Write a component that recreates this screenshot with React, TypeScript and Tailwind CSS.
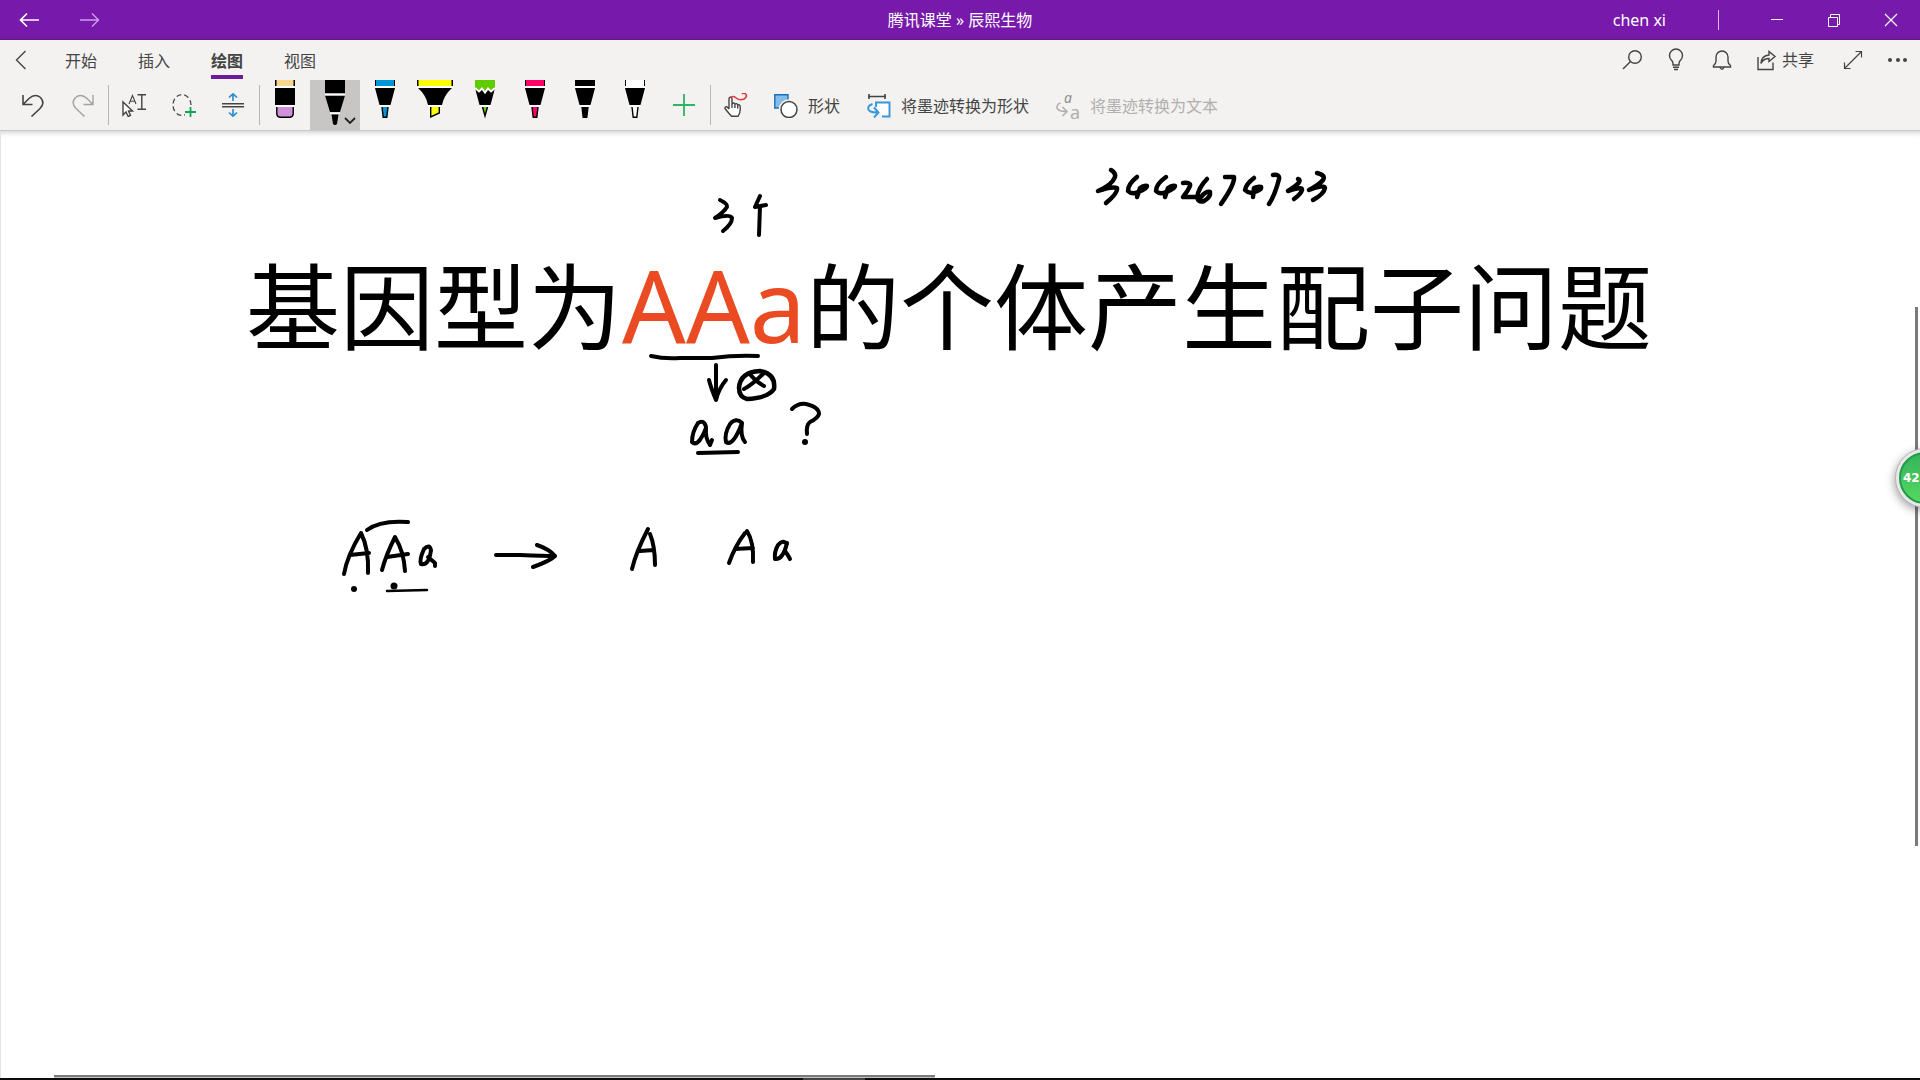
import type { ReactNode } from 'react'

const TABS = ['开始', '插入', '绘图', '视图']

const TIP_PENS = [
  { label: '蓝色笔', color: '#0096d6' },
  { label: '荧光笔', color: '#ffff00', kind: 'highlighter' },
  { label: '铅笔', color: '#5fcb00', kind: 'pencil' },
  { label: '粉色笔', color: '#ff0066' },
  { label: '黑色笔', color: '#000000' },
  { label: '白色笔', color: '#ffffff' },
]

// Pen strokes on the page, grouped by nib width
const THICK_INK = [
  'M1111 170Q1116 173 1115 177Q1112 185 1098 191Q1112 186 1117 188Q1118 193 1106 203',
  'M1137 177Q1128 184 1128 191Q1132 195 1138 192Q1147 189 1147 186Q1144 185 1140 188L1137 197',
  'M1166 177Q1156 184 1156 191Q1160 195 1166 192Q1175 189 1175 186Q1172 185 1168 188L1165 197',
  'M1183 183Q1191 182 1190 186Q1188 191 1183 197L1197 197',
  'M1207 179Q1199 187 1197 197Q1198 203 1204 201Q1211 197 1210 192Q1206 191 1201 197',
  'M1225 177L1234 177Q1235 184 1221 204',
  'M1254 178Q1246 184 1245 190Q1249 194 1254 192Q1262 190 1261 187Q1258 186 1254 188L1253 197',
  'M1273 175Q1280 174 1279 179Q1275 195 1269 204',
  'M1298 179Q1304 181 1288 191Q1303 186 1302 190Q1301 194 1294 199',
  'M1317 173Q1326 175 1323 180Q1319 185 1309 190Q1324 184 1325 188Q1324 194 1313 200',
  'M739 388Q740 372 760 371Q776 374 774 389Q768 398 747 399Q739 397 739 388',
]

const INK = [
  'M720 200Q728 204 727 207Q724 212 715 218Q730 214 732 218Q732 224 723 231',
  'M760 196L755 207L766 205M760 206L759 235',
  'M651 356Q664 359 680 358L712 358Q735 355 758 356',
  'M716 365L716 400M709 380Q711 388 716 400Q719 388 726 380',
  'M744 389Q752 385 764 373M749 373Q755 381 764 386',
  'M706 427Q704 419 698 423Q692 432 692 442Q698 448 706 428Q705 438 710 445L712 440',
  'M742 423Q736 417 730 424Q724 434 726 442Q733 447 742 423Q740 436 745 442',
  'M698 453L738 452',
  'M792 409Q798 403 806 404Q819 407 819 414Q818 418 810 422Q806 425 807 434',
  'M367 530Q380 520 408 522',
  'M344 574Q347 556 361 533Q369 549 368 573M350 555L369 553',
  'M382 570Q386 555 395 537Q404 552 405 571M387 557L408 554',
  'M431 551Q430 543 424 549Q419 560 421 564Q429 566 431 550M428 557L435 563L435 566',
  'M496 555L520 555Q545 556 555 556M537 545Q549 549 555 556Q550 561 533 567',
  'M632 569Q636 552 648 529M650 534Q655 546 655 565M640 551L654 550',
  'M729 563Q735 546 745 533M747 531Q754 542 753 562M735 549L753 548',
  'M787 544Q783 539 778 545Q774 552 775 559Q783 560 787 543M785 551Q788 555 790 559',
]

function Icon({ size = 24, className = '', children }: { size?: number; className?: string; children: ReactNode }) {
  return (
    <svg width={size} height={size} viewBox={`0 0 ${size} ${size}`} fill="none" stroke="currentColor"
      strokeWidth="1.4" className={`shrink-0 ${className}`} aria-hidden="true">
      {children}
    </svg>
  )
}

function ToolButton({ label, className = '', children }: { label: string; className?: string; children: ReactNode }) {
  return (
    <button aria-label={label} className={`w-[50px] h-[50px] flex items-center justify-center ${className}`}>
      {children}
    </button>
  )
}

function Divider() {
  return <div className="w-px h-10 bg-[#b8b7b6]" />
}

function Pen({ color, kind }: { color: string; kind?: string }) {
  if (kind === 'highlighter') {
    return (
      <Icon size={50}>
        <g stroke="none">
          <path d="M7 0H43V6H7Z" fill="#000" />
          <path d="M8.500 0H41.500V6H8.500Z" fill={color} />
          <path d="M7 6H43V8H7ZM18 25H32V27H18Z" fill="#fff" />
          <path d="M8 8H42Q34 15 32 25H18Q16 15 8 8Z" fill="#000" />
        </g>
        <path d="M20.700 27V37L29.300 33V27" fill={color} stroke="#000" />
      </Icon>
    )
  }
  return (
    <Icon size={50}>
      <g stroke="none">
        <path d="M15 0H35V7H15Z" fill="#000" />
        <path d="M16 0H34V7H16Z" fill={color} />
        <path d="M15 6H35V8H15Z" fill="#fff" />
        <path d="M15 8H35L30.500 25H19.500Z" fill="#000" />
        <path d="M19 25H31V27H19Z" fill="#fff" />
        {kind === 'pencil' && (
          <>
            <path d="M15 0H35V9L31 12L28 9L25 13L22 9L19 12L15 8Z" fill={color} />
            <path d="M15 8L19 11.500L22 8.500L25 12.500L28 8.500L31 11.500L35 8" fill="none" stroke="#fff" strokeWidth="2" />
          </>
        )}
      </g>
      {kind === 'pencil'
        ? <path d="M22.500 27L25 36L27.500 27" fill={color} stroke="#000" />
        : <path d="M22 27L23.200 37.200H26.800L28 27" fill={color} stroke="#000" />}
    </Icon>
  )
}

function TitleBar() {
  return (
    <header className="h-10 bg-[#7719aa] border-b border-[#55207a] text-white grid grid-cols-[1fr_auto_1fr] items-center">
      <div className="flex items-center pl-[18px] gap-[36px]">
        <button aria-label="后退"><Icon><path d="M21 12H3M9 5.500L2.500 12L9 18.500" strokeWidth="1.700" /></Icon></button>
        <button aria-label="前进" className="text-[#cf9fe6]"><Icon><path d="M2 12H20M14 5.500L20.500 12L14 18.500" /></Icon></button>
      </div>
      <h2 className="text-base">腾讯课堂 » 辰熙生物</h2>
      <div className="flex items-center justify-end">
        <span className="mr-[52px]">chen xi</span>
        <span className="w-px h-5 bg-[#d9bde8] mr-[30px]" />
        <button aria-label="最小化" className="w-[57px] h-9 flex items-center justify-center">
          <Icon size={16}><path d="M1 7.500H13" strokeWidth="1" /></Icon>
        </button>
        <button aria-label="还原" className="w-[57px] h-9 flex items-center justify-center">
          <Icon size={16}><path d="M1.500 5.500H10.500V14.500H1.500ZM3.500 5.500V2.500H12.500V12.500H10.500" strokeWidth="1" /></Icon>
        </button>
        <button aria-label="关闭" className="w-[57px] h-9 flex items-center justify-center">
          <Icon size={16}><path d="M1 2L13 14M13 2L1 14" strokeWidth="1.200" /></Icon>
        </button>
      </div>
    </header>
  )
}

function TabRow() {
  return (
    <div className="h-10 flex items-center justify-between text-[#444]">
      <nav className="flex items-center pl-[9px] h-full">
        <button aria-label="返回" className="mr-8">
          <Icon><path d="M16.500 3L7.500 12L16.500 21" /></Icon>
        </button>
        <div className="flex gap-[41px] h-full pb-px">
          {TABS.map((tab) => (
            <button key={tab} className={`h-full pt-1.5 border-b-4 ${tab === '绘图' ? 'font-bold border-[#6b1a9c]' : 'border-transparent'}`}>
              {tab}
            </button>
          ))}
        </div>
      </nav>
      <div className="flex items-center pr-[10px]">
        <button aria-label="搜索" className="mr-[21px]">
          <Icon><circle cx="15" cy="9" r="6.300" /><path d="M10.500 13.500L3 21" /></Icon>
        </button>
        <button aria-label="操作说明" className="mr-[22px]">
          <Icon>
            <path d="M8 17V15.500Q8 13.500 6.300 12A6.500 6.500 0 1 1 15.700 12Q14 13.500 14 15.500V17ZM8 19.200H14M9 21.500H13" />
          </Icon>
        </button>
        <button aria-label="通知" className="mr-[20px]">
          <Icon>
            <path d="M2.500 19V17.500Q5 16 5 13V9A6 6 0 0 1 17 9V13Q17 16 19.500 17.500V19ZM9 19.500Q11 23 13 19.500" />
          </Icon>
        </button>
        <button className="flex items-center gap-[3px] mr-[27px]">
          <Icon>
            <path d="M3 9V21.500H18V14.500" />
            <path d="M6 15.500Q6.500 7.500 14 7V3.500L20 8.500L14 13.500V10.500Q8.500 10.500 6 15.500Z" />
          </Icon>
          共享
        </button>
        <button aria-label="全屏" className="mr-[21px]">
          <Icon><path d="M3.500 20.500L20.500 3.500M14.500 3.500H20.500V9.500M3.500 14.500V20.500H9.500" strokeWidth="1.200" /></Icon>
        </button>
        <button aria-label="更多">
          <Icon><g fill="currentColor" stroke="none"><circle cx="4" cy="12" r="2" /><circle cx="12" cy="12" r="2" /><circle cx="19" cy="12" r="2" /></g></Icon>
        </button>
      </div>
    </div>
  )
}

function DrawToolbar() {
  return (
    <div role="toolbar" aria-label="绘图" className="h-[50px] flex items-center pl-2 text-[#444]">
      <ToolButton label="撤消">
        <Icon><path d="M2 2V11.500H11.500M2.500 11L8 5.500Q14 0 19.500 4.500Q24.500 10 19 15.500L10.500 23.500" strokeWidth="1.600" /></Icon>
      </ToolButton>
      <ToolButton label="恢复" className="text-[#a3a2a1]">
        <Icon><path d="M22 2V11.500H12.500M21.500 11L16 5.500Q10 0 4.500 4.500Q-0.500 10 5 15.500L13.500 23.500" /></Icon>
      </ToolButton>
      <Divider />
      <ToolButton label="选择对象或文本">
        <Icon>
          <path d="M1 9V22L4 19L6.200 23.500L8.500 22.500L6.500 18H10.500Z" fill="#fff" />
          <path d="M7 11L10.500 2.500L14 11M8.300 8.300H12.800" strokeWidth="1.100" />
          <path d="M15.500 1.700H24M15.500 16.300H24M19.800 1.700V16.300" />
        </Icon>
      </ToolButton>
      <ToolButton label="套索选择">
        <Icon>
          <ellipse cx="10" cy="12" rx="9" ry="10.500" strokeDasharray="5 3" strokeWidth="1.300" />
          <path d="M13 12H24V24H13Z" fill="#f3f2f1" stroke="none" />
          <path d="M18.500 14V24M13 19H24" stroke="#13a452" strokeWidth="1.800" />
        </Icon>
      </ToolButton>
      <ToolButton label="插入空间">
        <Icon>
          <path d="M0 10.700H22M0 13.700H22" strokeWidth="1.500" />
          <path d="M11 8V1M7 4.500L11 0.800L15 4.500M11 16V23M7 19.500L11 23.200L15 19.500" stroke="#2b90d0" strokeWidth="1.700" />
        </Icon>
      </ToolButton>
      <Divider />
      <ToolButton label="橡皮擦">
        <Icon size={50}>
          <g stroke="none">
            <path d="M15 0H35V6H15Z" fill="#000" />
            <path d="M16.500 0H33.500V6H16.500Z" fill="#f8d68f" />
            <path d="M15 6H35V8H15ZM15 25H35V27H15Z" fill="#fff" />
            <path d="M15 8H35V25H15Z" fill="#000" />
          </g>
          <path d="M16.800 27V34Q17 37 20 37.200H30Q33 37 33.200 34V27" fill="#cf92d9" stroke="#000" />
        </Icon>
      </ToolButton>
      <ToolButton label="黑色笔，已选定" className="bg-[#c8c6c4]">
        <Icon size={50}>
          <g stroke="none">
            <path d="M15 0H35V13.500H15ZM15 15.500H35L30 32H20ZM21.500 34.500H28.500L27 44Q25 46 23 44Z" fill="#000" />
            <path d="M15 13.500H35V15.500H15ZM20 32.500H30V34H20Z" fill="#fff" />
          </g>
          <path d="M35 38L40 43L45 38" stroke="#222" strokeWidth="1.800" />
        </Icon>
      </ToolButton>
      {TIP_PENS.map((pen) => (
        <ToolButton key={pen.label} label={pen.label}>
          <Pen color={pen.color} kind={pen.kind} />
        </ToolButton>
      ))}
      <ToolButton label="添加笔">
        <Icon><path d="M11 1V23M0 12H22" stroke="#2fb463" strokeWidth="1.800" /></Icon>
      </ToolButton>
      <Divider />
      <ToolButton label="使用鼠标或触摸绘制">
        <Icon>
          <path d="M5 16V6Q5 4.300 6.500 4.300Q8 4.300 8 6V11.500Q8.300 9.800 9.700 10Q10.900 10.200 10.900 11.700Q11.300 10.300 12.600 10.700Q13.700 11.100 13.700 12.400Q14.300 11.400 15.300 11.900Q16.200 12.400 16.200 13.700V17Q16.200 20 14 23.300H7.500Q4.500 20 1 15.500Q0.800 13.500 3 13.800L5 16M8 11V15M10.900 12V15M13.700 13V15.500" fill="#fff" strokeWidth="1.400" />
          <path d="M6.500 4.500Q9.500 2.500 11.500 4.500Q15 8 20 6Q24 3.500 21.500 0.800Q19.500 -0.500 18 1" stroke="#e03a3a" strokeWidth="1.600" />
        </Icon>
      </ToolButton>
      <div className="flex gap-px">
        <button className="h-[50px] px-[13px] pt-0.5 flex items-center gap-2.5">
          <Icon>
            <path d="M0.800 0.800H14V14H0.800Z" fill="#83bdea" stroke="#1a6fb8" />
            <circle cx="15" cy="15.500" r="8.800" fill="#fff" stroke="#f3f2f1" strokeWidth="3" />
            <circle cx="15" cy="15.500" r="8" fill="#fff" strokeWidth="1.500" />
          </Icon>
          形状
        </button>
        <button className="h-[50px] px-[13px] pt-0.5 flex items-center gap-2.5">
          <Icon>
            <path d="M2 0V5M18 0V5M1 2.500H19" strokeWidth="1.600" />
            <path d="M9 13V8.500H22.500V22.500H15" fill="#fff" stroke="none" />
            <path d="M9 13V8.500H22.500V22.500H15M5.500 10Q1 11.500 1.200 15Q2 18.500 10 18.500M7 13.500L11.500 18.500L7 23.500" stroke="#3397dc" strokeWidth="1.900" />
          </Icon>
          将墨迹转换为形状
        </button>
        <button disabled className="h-[50px] px-[13px] pt-0.5 flex items-center gap-2.5 text-[#b0afae]">
          <span className="relative w-6 h-[26px] flex flex-col justify-between" aria-hidden="true">
            <span className="self-center text-sm leading-[10px] italic text-[#8f8e8d]">a</span>
            <span className="self-end text-lg leading-[14px]">a</span>
            <Icon className="absolute left-0 top-0">
              <path d="M4.500 10Q0.800 11 1 15Q2 18.500 10 18.500M6.500 14L11 18.500L6.500 23" strokeWidth="1.600" />
            </Icon>
          </span>
          将墨迹转换为文本
        </button>
      </div>
    </div>
  )
}

function Page() {
  return (
    <main className="relative flex-1 overflow-hidden bg-white border-l border-[#e4e4e4] shadow-[inset_0_6px_5px_-4px_#d4d4d4]">
      <h1 className="pl-[245px] pt-[101px] text-[94px] leading-[140px] text-black whitespace-nowrap font-['Noto_Sans_CJK_SC',sans-serif]">
        基因型为<span className="text-[100px] text-[#ea4b22] font-['Noto_Sans',sans-serif]">AAa</span>的个体产生配子问题
      </h1>

      {/* Ink layer */}
      <svg className="absolute left-0 top-0 w-[1400px] h-[480px]" viewBox="1 131 1400 480" fill="none" stroke="#000"
        strokeLinecap="round" strokeLinejoin="round" role="img" aria-label="手写墨迹">
        {THICK_INK.map((d) => <path key={d} d={d} strokeWidth="4.500" />)}
        {INK.map((d) => <path key={d} d={d} strokeWidth="4" />)}
        <path d="M387 591L427 590" strokeWidth="2.500" />
        <g fill="#000" stroke="none">
          <circle cx="354" cy="589" r="3" />
          <circle cx="394" cy="586" r="3.500" />
          <circle cx="805" cy="442" r="3" />
        </g>
      </svg>

      {/* Scroll thumbs */}
      <div className="absolute right-[2px] top-[176px] w-[3px] h-[539px] bg-[#7a7a7a]" />
      <div className="absolute left-[53px] bottom-0 w-[881px] h-[3px] bg-[#7a7a7a] border-b border-[#c4c4c4]" />

      <div className="absolute -right-[35px] top-[317px] size-[60px] rounded-full bg-[#e9e9e9] border border-[#b5b5b5] p-[3px] shadow-[-1px_3px_8px_rgba(0,0,0,0.35)]">
        <div className="h-full rounded-full border-2 border-[#219a4e] bg-linear-to-b from-[#35b45c] to-[#55d860] flex items-center pl-0.5 text-xs font-bold text-white font-['DejaVu_Sans',sans-serif]">
          42
        </div>
      </div>
    </main>
  )
}

export default function App() {
  return (
    <div className="min-h-screen flex flex-col bg-[#f3f2f1] text-base leading-6 font-['Noto_Sans','Noto_Sans_CJK_SC',sans-serif]">
      <TitleBar />
      <TabRow />
      <DrawToolbar />
      <div className="h-px bg-[#c9c8c7]" />
      <Page />
      <footer className="h-0.5 bg-[#0c0c0c]">
        <div className="ml-[803px] w-[62px] h-full bg-[#444]" />
      </footer>
    </div>
  )
}
